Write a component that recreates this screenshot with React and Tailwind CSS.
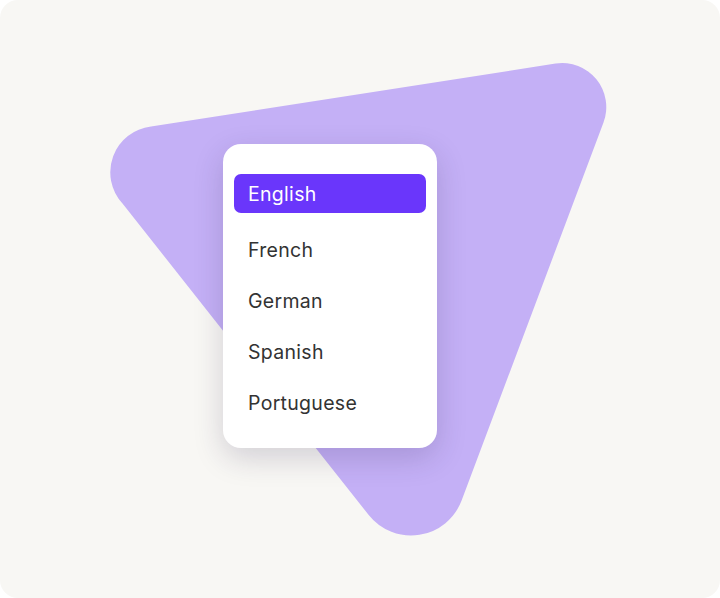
const languages = ['French', 'German', 'Spanish', 'Portuguese'];

function Blob() {
  // rounded triangle behind the menu
  return (
    <svg className="absolute inset-0" width="720" height="598" viewBox="0 0 720 598" aria-hidden="true">
      <path
        d="M151 126.6 L555.6 63.6 A44 44 0 0 1 603.5 122.5 L461.6 500.5 A54 54 0 0 1 368.7 515 L122.5 203.5 A46 46 0 0 1 151 126.6 Z"
        fill="#c4b0f6"
      />
    </svg>
  );
}

export default function App() {
  return (
    <div className="bg-white w-[720px] h-[598px]">
      <div
        className="relative w-[720px] h-[598px] rounded-[18px] bg-[#f8f7f4] overflow-hidden"
        style={{ fontFamily: 'Inter, "Open Sans", sans-serif' }}
      >
        <Blob />
        <div className="relative pt-[144px] pl-[223px]">
          <div className="w-[214px] h-[304px] bg-white rounded-[18px] shadow-[0_10px_30px_rgba(40,30,70,0.18)] px-[11px] pt-[30px]">
            <div className="h-[39px] rounded-[7px] bg-[#6a36fb] text-white flex items-center pl-[14px] pt-[3px] text-[19.5px] tracking-[0.3px]">
              English
            </div>
            <ul className="mt-[11px]">
              {languages.map((lang) => (
                <li key={lang} className="h-[51px] flex items-center pl-[14px] pt-[2px] text-[19.5px] tracking-[0.3px] text-[#333333]">
                  {lang}
                </li>
              ))}
            </ul>
          </div>
        </div>
      </div>
    </div>
  );
}
